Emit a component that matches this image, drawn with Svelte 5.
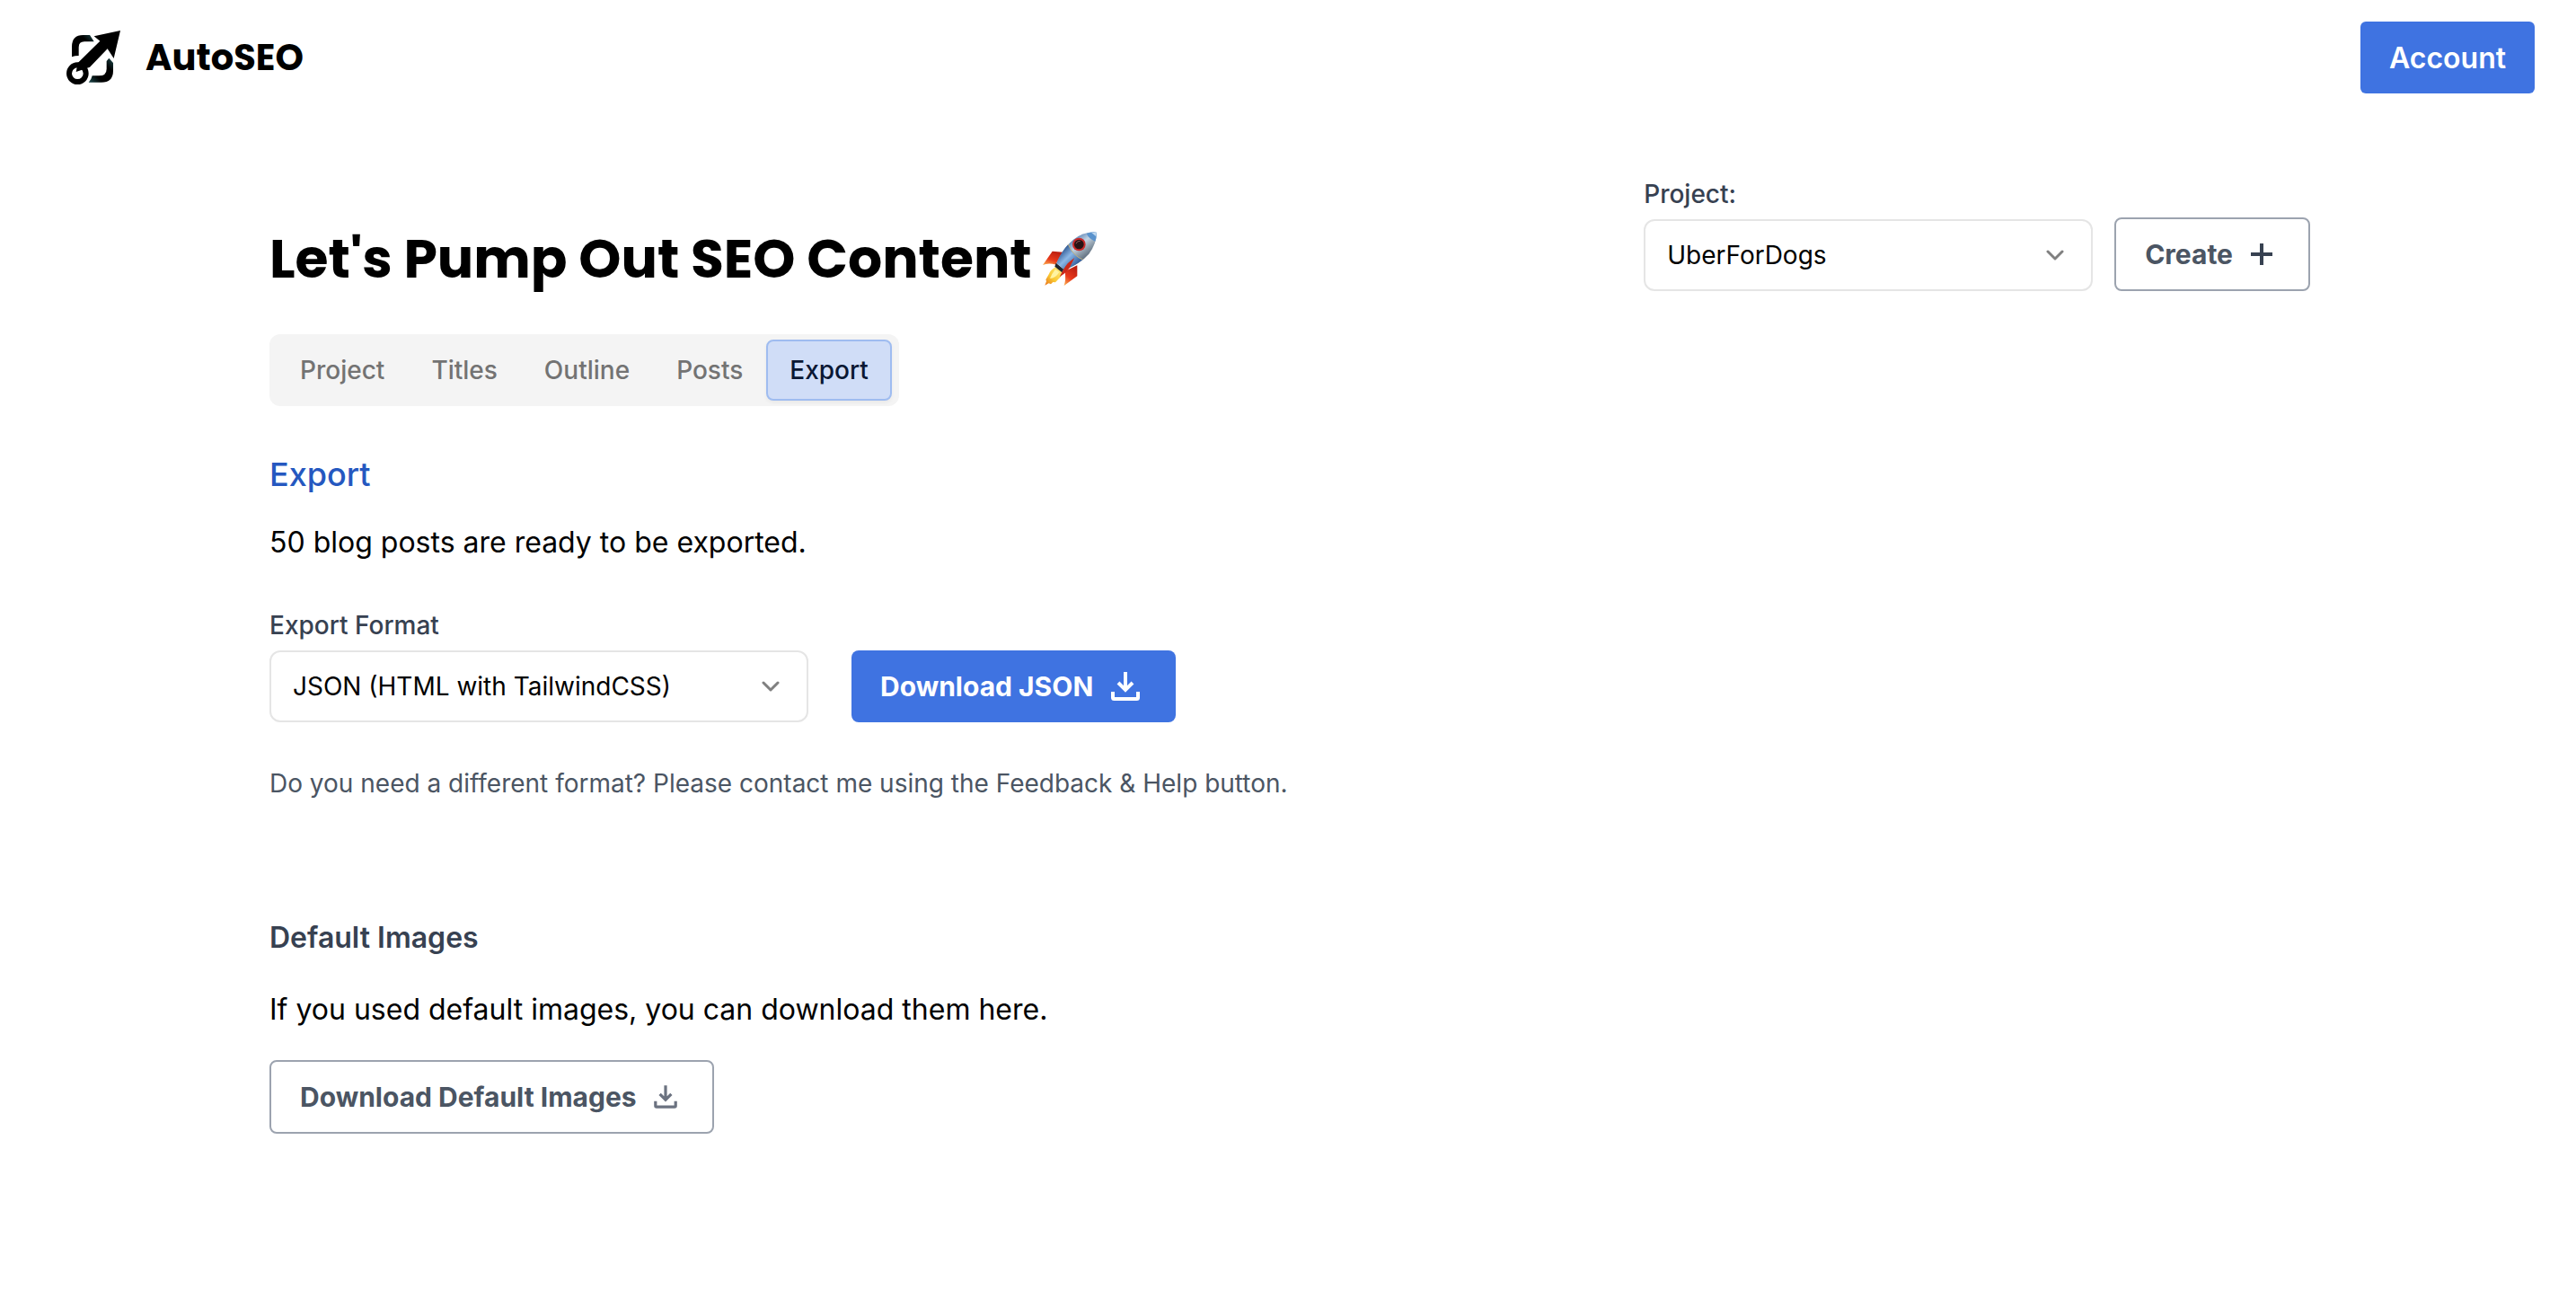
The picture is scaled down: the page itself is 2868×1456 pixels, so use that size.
<script>
  const tabs = ['Project', 'Titles', 'Outline', 'Posts', 'Export'];
  let active = $state('Export');
</script>

{#snippet download()}
  <svg class="icon" viewBox="0 0 40 40" fill="none" stroke="currentColor" stroke-width="4" aria-hidden="true">
    <path d="M20 4v20M12 16l8 8 8-8M6 26v6.500q0 1.500 1.500 1.500h25q1.500 0 1.500-1.500V26" />
  </svg>
{/snippet}

{#snippet chevron()}
  <svg class="chevron" viewBox="0 0 24 24" fill="none" stroke="currentColor" stroke-width="3" stroke-linecap="round" stroke-linejoin="round" aria-hidden="true">
    <path d="M4 8l8 8 8-8" />
  </svg>
{/snippet}

<header>
  <a class="brand" href="/">
    <svg class="logo" viewBox="0 0 180 180" aria-hidden="true">
      <defs>
        <linearGradient id="upper" x1="0" y1="1" x2="1" y2="0">
          <stop offset=".7" stop-color="#000" /><stop offset="1" stop-color="#1f4d50" />
        </linearGradient>
        <linearGradient id="lower" x1="1" y1="0" x2="0" y2="1">
          <stop offset="0" stop-color="#1f4d50" /><stop offset=".3" stop-color="#000" />
          <stop offset=".7" stop-color="#000" /><stop offset="1" stop-color="#1f4d50" />
        </linearGradient>
      </defs>
      <path d="M18 88V54Q18 15 56 15H78L92 37H60Q41 37 41 56V84Q28 84 18 88Z" fill="url(#upper)" />
      <path d="M142 92 156 108V134Q156 173 116 173H74Q84 162 86 151H108Q134 151 134 128V102Z" fill="url(#lower)" />
      <circle cx="37" cy="143" r="28" fill="none" stroke="#000" stroke-width="18" />
      <path d="M180 0 92 19 112 35 38 108 32 138 78 122 137 61 158 93Z" />
    </svg>
    <span>AutoSEO</span>
  </a>
  <button class="account" type="button">Account</button>
</header>

<main>
  <div class="top">
    <h1>Let's Pump Out SEO Content
      <svg class="rocket" viewBox="18 18 180 180" role="img" aria-label="rocket">
        <defs>
          <linearGradient id="hull" x1=".3" y1=".2" x2=".75" y2=".75">
            <stop offset="0" stop-color="#4a76ae" /><stop offset=".4" stop-color="#c3d3e3" />
            <stop offset=".6" stop-color="#9aa9b6" /><stop offset="1" stop-color="#4d5c6c" />
          </linearGradient>
          <linearGradient id="tail" x1=".2" y1=".2" x2=".8" y2=".8">
            <stop offset="0" stop-color="#2d5590" /><stop offset=".45" stop-color="#8cb8e6" />
            <stop offset="1" stop-color="#2f5c9c" />
          </linearGradient>
          <linearGradient id="fin" x1=".7" y1="0" x2=".2" y2="1">
            <stop offset="0" stop-color="#b81d10" /><stop offset=".6" stop-color="#e8391b" />
            <stop offset="1" stop-color="#f9a24a" />
          </linearGradient>
          <linearGradient id="flame" x1="1" y1="0" x2="0" y2="1">
            <stop offset="0" stop-color="#fff08a" /><stop offset=".6" stop-color="#f9c832" />
            <stop offset="1" stop-color="#e8711c" />
          </linearGradient>
        </defs>
        <path d="M86 86 50 83 18 129Q36 120 63 128Z" fill="url(#fin)" />
        <path d="M133 130V166L89 198Q96 178 92 150Z" fill="url(#fin)" />
        <path d="M62 134Q44 145 39 158L28 178 30 183 25 197 38 190 45 193 52 186 60 187 70 176Q84 166 84 148Z" fill="url(#flame)" />
        <path d="M60 143Q47 159 42 174 60 174 73 153Z" fill="#fff3a1" />
        <path d="M62 122 88 143 82 154 58 134Z" fill="#20262d" />
        <path d="M197 20Q156 16 120 44 88 70 64 122L90 145Q143 125 172 92 199 56 197 20Z" fill="url(#hull)" />
        <path d="M103 60Q80 84 64 122L90 145Q126 132 151 111 118 97 103 60Z" fill="url(#tail)" />
        <path d="M103 60Q118 97 151 111" fill="none" stroke="#c1b07a" stroke-width="3" />
        <path d="M164 24Q172 42 193 50 199 34 197 20 180 17 164 24Z" fill="#5a93cd" />
        <path d="M180 20 196 34 197 20Z" fill="#bfd8ef" />
        <path d="M124 105Q114 112 101 124 89 138 74 169 105 150 113 127Z" fill="#cb2919" />
        <circle cx="139" cy="60" r="22" fill="#c92a2a" />
        <circle cx="139" cy="60" r="16" fill="#281315" />
        <path d="M129 58Q132 48 143 49" fill="none" stroke="#8c5559" stroke-width="3" />
      </svg>
    </h1>
    <div class="picker">
      <label for="project">Project:</label>
      <div class="row">
        <div class="select project">
          <select id="project"><option>UberForDogs</option></select>
          {@render chevron()}
        </div>
        <button class="outline create" type="button">Create
          <svg class="icon" viewBox="0 0 32 32" fill="none" stroke="currentColor" stroke-width="4" aria-hidden="true"><path d="M16 4v24M4 16h24" /></svg>
        </button>
      </div>
    </div>
  </div>

  <div class="tabs" role="tablist">
    {#each tabs as tab}
      <button type="button" role="tab" aria-selected={active === tab} class:active={active === tab} onclick={() => (active = tab)}>{tab}</button>
    {/each}
  </div>

  <section class="export">
    <h2>Export</h2>
    <p>50 blog posts are ready to be exported.</p>
    <label for="format">Export Format</label>
    <div class="row wide">
      <div class="select format">
        <select id="format"><option>JSON (HTML with TailwindCSS)</option></select>
        {@render chevron()}
      </div>
      <button class="primary" type="button">Download JSON {@render download()}</button>
    </div>
    <p class="hint">Do you need a different format? Please contact me using the Feedback &amp; Help button.</p>
  </section>

  <section class="images">
    <h3>Default Images</h3>
    <p>If you used default images, you can download them here.</p>
    <button class="outline" type="button">Download Default Images {@render download()}</button>
  </section>
</main>

<style>
  :global(body) { margin: 0; background: #fff; color: #000; font-family: Inter, sans-serif; }
  button, select { font: inherit; color: inherit; margin: 0; cursor: pointer; }
  h1, h2, h3, p { margin: 0; }
  header { display: flex; align-items: center; justify-content: space-between; padding: 24px 46px 0 74px; }
  .brand { display: flex; align-items: center; gap: 28px; color: #000; text-decoration: none; font: 700 40px/56px Poppins, Inter, sans-serif; }
  .logo { width: 60px; height: 60px; }
  .account { height: 80px; padding: 0 32px; border: 0; border-radius: 6px; background: #3f73e1; color: #fff; font-size: 32px; font-weight: 600; }
  main { width: 2272px; max-width: calc(100% - 64px); margin: 0 auto; padding: 92px 0 64px 4px; }
  .top { display: flex; justify-content: space-between; align-items: flex-end; }
  h1 { display: flex; align-items: center; gap: 12px; font: 700 60px/72px Poppins, Inter, sans-serif; }
  .rocket { width: 60px; height: 60px; }
  label { display: block; margin-bottom: 6px; color: #374151; font-size: 28px; line-height: 40px; font-weight: 500; }
  .row { display: flex; align-items: flex-end; gap: 24px; }
  .row.wide { gap: 48px; }
  .select { position: relative; }
  select { appearance: none; width: 100%; height: 80px; padding: 0 80px 0 24px; border: 2px solid #e5e5e5; border-radius: 12px; background: #fff; font-size: 28px; }
  .project { width: 500px; }
  .format { width: 600px; }
  .chevron { position: absolute; right: 30px; top: 28px; width: 24px; height: 24px; color: #808080; pointer-events: none; }
  .outline, .primary { display: inline-flex; align-items: center; gap: 16px; border-radius: 8px; font-size: 30px; font-weight: 700; }
  .outline { height: 82px; padding: 0 36px 0 32px; border: 2px solid #9ca3af; background: #fff; color: #4b5563; }
  .primary { height: 80px; padding: 0 36px 0 32px; border: 0; background: #3f73e1; color: #fff; }
  .outline .icon { width: 32px; height: 32px; color: #6b7280; }
  .create .icon { color: #374151; }
  .primary .icon { width: 40px; height: 40px; }
  .tabs { display: inline-flex; margin-top: 48px; padding: 6px 8px; border-radius: 12px; background: #f4f4f4; }
  .tabs button { height: 68px; padding: 0 24px; border: 2px solid transparent; border-radius: 8px; background: none; color: #737373; font-size: 28px; font-weight: 500; }
  .tabs .active { border-color: #9fbcf0; background: #d0ddf7; color: #0a1733; box-shadow: 0 2px 4px rgb(0 0 0 / 5%); }
  .export { margin-top: 48px; }
  h2 { color: #2558c0; font-size: 36px; line-height: 56px; font-weight: 500; }
  p { font-size: 32px; line-height: 48px; }
  .export p { margin-top: 24px; }
  .export label { margin: 48px 0 8px; }
  .export .hint { margin-top: 48px; color: #4b5563; font-size: 28px; line-height: 40px; }
  .images { margin-top: 128px; }
  h3 { color: #374151; font-size: 32px; line-height: 48px; font-weight: 600; }
  .images p { margin: 32px 0; }
</style>
